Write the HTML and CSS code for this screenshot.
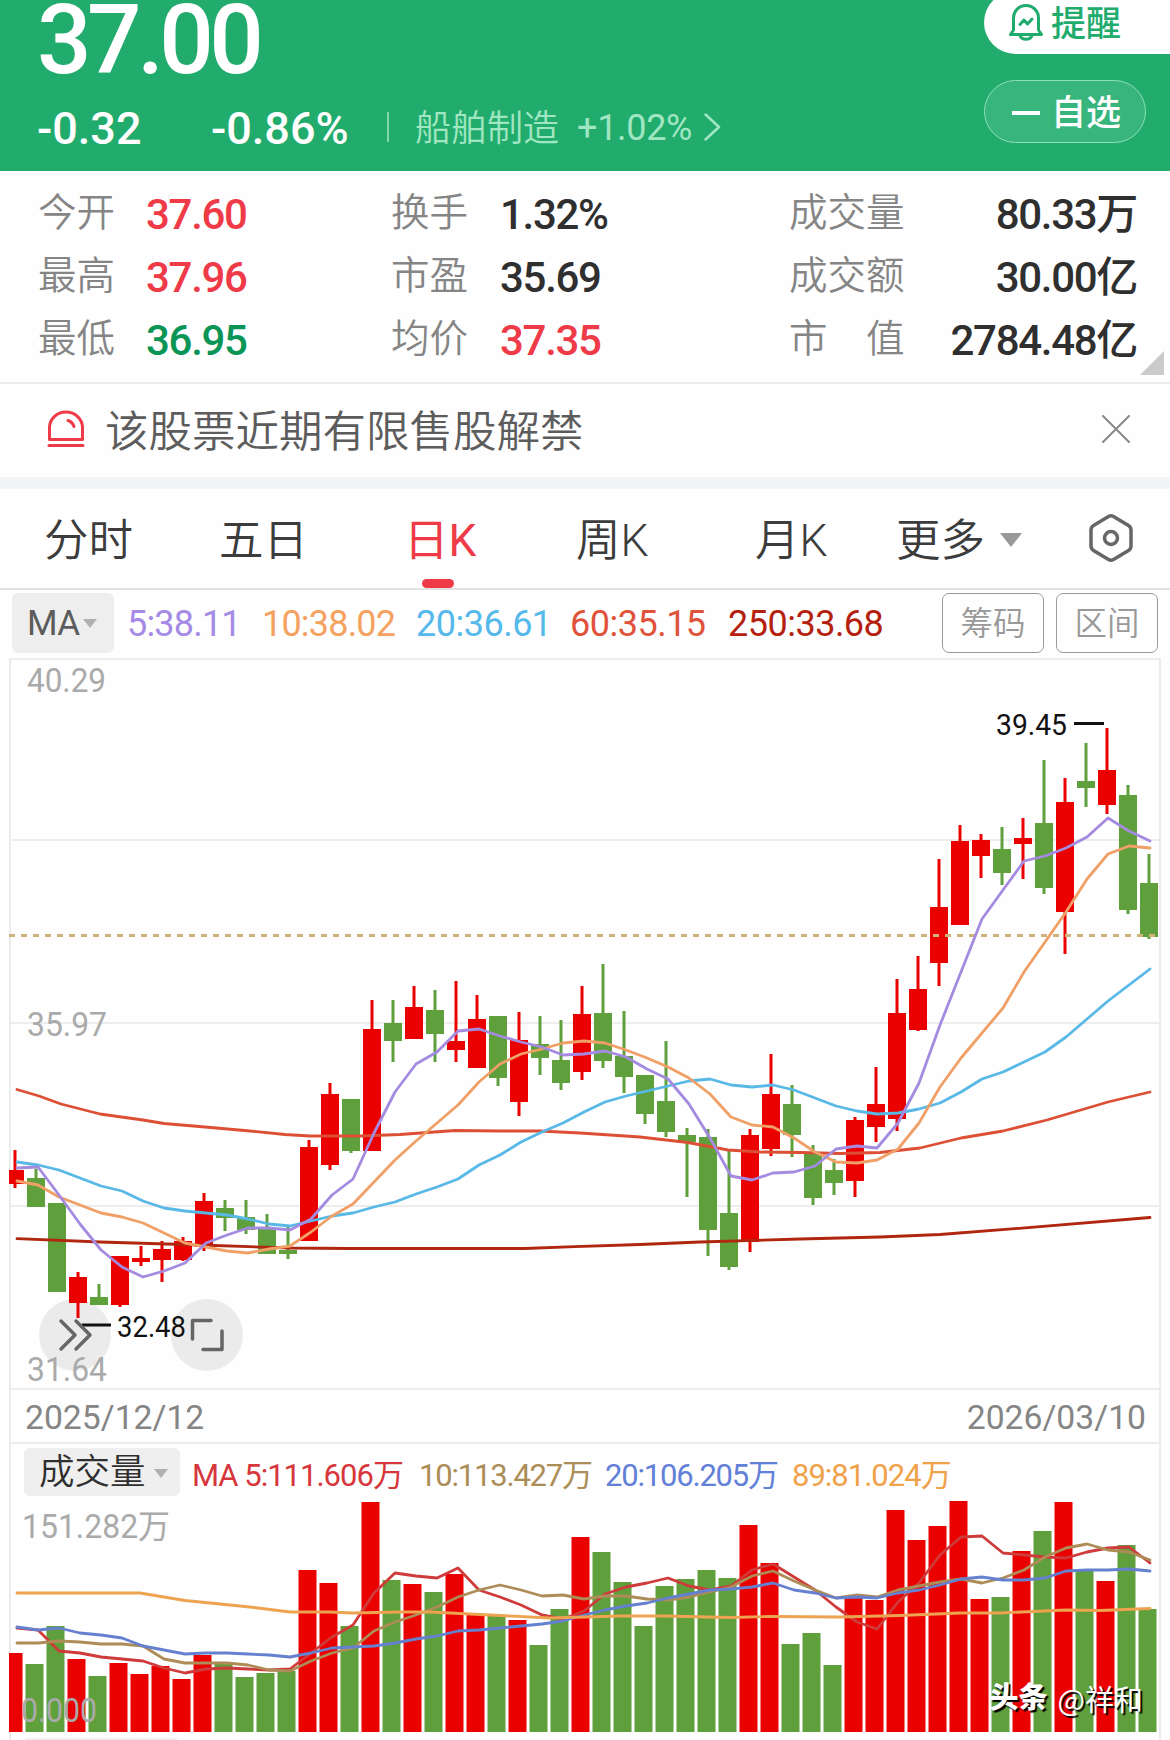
FILE: index.html
```html
<!DOCTYPE html>
<html lang="zh-CN">
<head>
    <meta charset="UTF-8">
    <meta name="viewport" content="width=device-width, initial-scale=1.0">
    <title>日K</title>
    <link rel="stylesheet" href="styles.css">
</head>
<body>
    <header class="quote-header">
        <div class="quote-main">
            <div class="price">37.00</div>
            <div class="change-row">
                <span class="change">-0.32</span>
                <span class="change-pct">-0.86%</span>
                <span class="divider"></span>
                <span class="sector">船舶制造</span>
                <span class="sector-pct">+1.02%</span>
                <svg class="chevron" width="17" height="28" viewBox="0 0 17 28"><path d="M1.5 1.5L15 14L1.5 26.5"/></svg>
            </div>
        </div>
        <div class="quote-actions">
            <div class="action remind">
                <svg width="36" height="38" viewBox="0 0 36 38">
                    <path d="M5.500 27V15a12.500 12.500 0 0 1 25 0v12l3 4.500H2.500z"/>
                    <path d="M12 32.500c1.500 5 10.500 5 12 0"/>
                    <path d="M12 21.500l4-4.500 3.500 4 4.500-5"/>
                </svg>
                <span>提醒</span>
            </div>
            <div class="action watch">
                <i class="minus"></i>
                <span>自选</span>
            </div>
        </div>
    </header>

    <section class="stats">
        <span class="label">今开</span><span class="num up">37.60</span>
        <span class="label">换手</span><span class="num">1.32%</span>
        <span class="label">成交量</span><span class="num last">80.33万</span>
        <span class="label">最高</span><span class="num up">37.96</span>
        <span class="label">市盈</span><span class="num">35.69</span>
        <span class="label">成交额</span><span class="num last">30.00亿</span>
        <span class="label">最低</span><span class="num down">36.95</span>
        <span class="label">均价</span><span class="num up">37.35</span>
        <span class="label">市　值</span><span class="num last">2784.48亿</span>
        <i class="corner"></i>
    </section>

    <section class="notice">
        <svg class="alarm" width="38" height="38" viewBox="0 0 38 38">
            <path d="M2.500 29.500V17.500a16.500 15.500 0 0 1 33 0v12z"/>
            <path d="M21 10.500c3 1 5 3 6 6"/>
            <path d="M2 35.500h34"/>
        </svg>
        <span class="notice-text">该股票近期有限售股解禁</span>
        <svg class="close" width="28" height="28" viewBox="0 0 28 28"><path d="M1 1L27 27M27 1L1 27"/></svg>
    </section>

    <nav class="tabs">
        <span>分时</span>
        <span>五日</span>
        <span class="active">日K</span>
        <span>周K</span>
        <span>月K</span>
        <span>更多</span>
        <i class="arrow"></i>
        <svg width="46" height="50" viewBox="0 0 46 50">
            <path d="M20.500 3.500q2.500-1.500 5 0l15 9q2.500 1.500 2.500 4.500v16q0 3-2.500 4.500l-15 9q-2.500 1.500-5 0l-15-9q-2.500-1.500-2.500-4.500v-16q0-3 2.500-4.500z"/>
            <circle cx="23" cy="25" r="6.500"/>
        </svg>
    </nav>

    <section class="ma-row">
        <div class="ma-select">MA<i class="arrow small"></i></div>
        <span class="ma5">5:38.11</span>
        <span class="ma10">10:38.02</span>
        <span class="ma20">20:36.61</span>
        <span class="ma60">60:35.15</span>
        <span class="ma250">250:33.68</span>
        <div class="tool first">筹码</div>
        <div class="tool">区间</div>
    </section>

    <main class="charts">
        <svg class="price-chart" id="priceChart" width="1170" height="732" viewBox="0 658 1170 732"></svg>
        <div class="dates"><span>2025/12/12</span><span>2026/03/10</span></div>
        <div class="vol-head">
            <div class="vol-select">成交量<i class="arrow small"></i></div>
            <span class="v5">MA 5:111.606万</span>
            <span class="v10">10:113.427万</span>
            <span class="v20">20:106.205万</span>
            <span class="v89">89:81.024万</span>
        </div>
        <svg class="vol-chart" id="volChart" width="1170" height="241" viewBox="0 1499 1170 241"></svg>
        <div class="watermark"><b>头条</b><span>@祥和</span></div>
    </main>

    <script src="chart.js"></script>
</body>
</html>
```
FILE: styles.css
```css
:root {
    --green: #21ac6e;
    --red: #ef3a48;
    --down: #0a9557;
    --text: #2f2f2f;
    --line: #ebebeb;
}

* {
    box-sizing: border-box;
    margin: 0;
    padding: 0;
}

body {
    width: 1170px;
    height: 1740px;
    overflow: hidden;
    background: #fefefe;
    color: var(--text);
    font-family: Roboto, "Noto Sans CJK SC", sans-serif;
    white-space: nowrap;
}

svg {
    display: block;
    flex: none;
    fill: none;
    stroke-linecap: round;
    stroke-linejoin: round;
}

/* header */
.quote-header {
    height: 171px;
    background: var(--green);
    color: #fff;
    display: flex;
    justify-content: space-between;
}

.quote-main {
    padding-left: 37px;
}

.price {
    height: 80px;
    line-height: 80px;
    font-size: 96px;
    font-weight: 500;
    letter-spacing: -4.500px;
}

.change-row {
    display: flex;
    align-items: center;
    height: 97px;
    font-size: 45px;
    font-weight: 500;
}

.change {
    width: 174px;
}

.change-pct {
    width: 176px;
}

.divider {
    width: 2px;
    height: 30px;
    margin-top: -3px;
    background: #7fd9a9;
}

.sector,
.sector-pct {
    color: #a0e6c0;
    font-size: 36px;
}

.sector {
    margin: -8px 0 0 26px;
    width: 162px;
    font-weight: 350;
}

.sector-pct {
    width: 127px;
    margin-top: -2px;
    font-weight: 400;
    letter-spacing: -0.300px;
}

.chevron {
    margin-top: -3px;
    stroke: #a0e6c0;
    stroke-width: 2.500;
}

.quote-actions {
    width: 186px;
    margin-top: -9px;
}

.action {
    display: flex;
    align-items: center;
    height: 63px;
    font-size: 35px;
    font-weight: 500;
}

.remind {
    background: #fff;
    color: var(--green);
    border-radius: 32px 0 0 32px;
    padding-left: 24px;
    gap: 7px;
    margin-bottom: 26px;
}

.remind svg {
    stroke: var(--green);
    stroke-width: 3;
    margin-top: -1px;
}

.remind span,
.watch span {
    line-height: 50px;
    margin-top: 4px;
}

.watch {
    width: 162px;
    padding-left: 27px;
    gap: 11px;
    background: #37b57c;
    border: 1.500px solid #8fe0b5;
    border-radius: 32px;
}

.minus {
    width: 28px;
    height: 4px;
    margin-top: 2px;
    background: #fff;
}

/* stats */
.stats {
    position: relative;
    display: grid;
    grid-template-columns: 108px 245px 109px 289px 126px 1fr;
    grid-auto-rows: 63px;
    align-items: center;
    height: 211px;
    padding: 12px 33px 0 38px;
}

.label {
    color: #858585;
    font-size: 38.500px;
    font-weight: 350;
    line-height: 50px;
    margin-top: -3px;
}

.num {
    font-size: 42px;
    font-weight: 500;
    line-height: 50px;
    letter-spacing: -1.300px;
}

.last {
    text-align: right;
}

.up {
    color: var(--red);
}

.down {
    color: var(--down);
}

.corner {
    position: absolute;
    right: 6px;
    bottom: 7px;
    border-left: 24px solid transparent;
    border-bottom: 24px solid #cacaca;
}

/* notice */
.notice {
    display: flex;
    align-items: center;
    height: 107px;
    padding: 0 40px 0 47px;
    border-top: 2px solid var(--line);
    border-bottom: 12px solid #f3f4f8;
}

.alarm {
    margin-top: -3px;
    stroke: var(--red);
    stroke-width: 3;
}

.notice-text {
    flex: 1;
    margin: 4px 0 0 20px;
    font-size: 43.500px;
    font-weight: 350;
    line-height: 60px;
    color: #5c5c5c;
}

.close {
    margin-top: -3px;
    stroke: #888;
    stroke-width: 2;
}

/* tabs */
.tabs {
    display: grid;
    grid-template-columns: 175px 185px 172px 179px 141px 104px 88px 46px;
    align-items: center;
    height: 101px;
    padding-left: 44px;
    border-bottom: 2px solid #e2e2e2;
    font-size: 44.500px;
    font-weight: 350;
    color: #3c3c3c;
}

.tabs span {
    position: relative;
    line-height: 60px;
    margin-top: 4px;
}

.tabs .active {
    color: var(--red);
    font-weight: 400;
}

.active::after {
    content: "";
    position: absolute;
    left: 18px;
    bottom: -17px;
    width: 32px;
    height: 9px;
    border-radius: 5px;
    background: var(--red);
}

.tabs svg {
    margin-top: -2px;
    stroke: #666;
    stroke-width: 3.500;
}

.arrow {
    width: 0;
    border: 11px solid transparent;
    border-top: 14px solid #999;
    border-bottom: 0;
}

.tabs .arrow {
    margin-top: 3px;
}

.arrow.small {
    border-width: 9px 7px 0;
    border-top-color: #b0b0b0;
}

/* moving averages */
.ma-row {
    display: flex;
    align-items: center;
    height: 68px;
    padding: 0 12px 2px;
    font-size: 36px;
    letter-spacing: -0.500px;
}

.ma-row > span {
    padding-top: 2px;
}

.ma-select {
    display: flex;
    align-items: center;
    gap: 3px;
    width: 102px;
    height: 60px;
    margin-right: 13px;
    padding-left: 15px;
    border-radius: 6px;
    background: #eee;
    color: #5c5c5c;
    font-size: 35px;
}

.ma5 { width: 135px; letter-spacing: -0.800px; color: #a58ae6; }
.ma10 { width: 154px; letter-spacing: -0.800px; color: #f5a15f; }
.ma20 { width: 154px; color: #55b9ec; }
.ma60 { width: 158px; color: #e0523a; }
.ma250 { color: #b5210f; }

.tool {
    width: 102px;
    height: 60px;
    line-height: 60px;
    border: 1.500px solid #9a9a9a;
    border-radius: 7px;
    color: #999;
    font-size: 32.500px;
    font-weight: 350;
    letter-spacing: 0;
    text-align: center;
}

.tool.first {
    margin: 0 12px 0 auto;
}

/* charts */
.charts {
    position: relative;
}

.dates {
    display: flex;
    justify-content: space-between;
    align-items: center;
    height: 52px;
    margin: 0 9px;
    padding: 3px 13px 0 14px;
    border: 2px solid var(--line);
    border-width: 0 2px;
    color: #858585;
    font-size: 33.700px;
}

.vol-head {
    display: flex;
    align-items: center;
    height: 57px;
    margin: 0 9px;
    padding: 1px 0 0 13px;
    border: 2px solid var(--line);
    border-bottom: 0;
    font-size: 31px;
    letter-spacing: -1px;
}

.vol-select {
    display: flex;
    align-items: center;
    gap: 8px;
    width: 156px;
    height: 48px;
    margin-right: 12px;
    padding: 0 0 0 15px;
    border-radius: 6px;
    background: #efefef;
    font-size: 35.500px;
    font-weight: 350;
    line-height: 40px;
    letter-spacing: 0;
}

.vol-select .arrow {
    margin-top: 2px;
}

.v5 { width: 227px; color: #d6363c; }
.v10 { width: 186px; color: #ac8d57; }
.v20 { width: 187px; color: #6280d8; }
.v89 { color: #f0a24a; }

.v10,
.v20 {
    letter-spacing: -1.200px;
}

.price-chart polyline,
.vol-chart polyline {
    stroke-width: 2.800;
}

.axis {
    fill: #aaa;
    font-size: 33px;
}

.mark {
    fill: #111;
    font-size: 29px;
}

.watermark {
    position: absolute;
    right: 27px;
    bottom: 22px;
    display: flex;
    gap: 10px;
    color: #fff;
    font-size: 29px;
    line-height: 40px;
    text-shadow: 2px 2px 1px #000;
}

.watermark b {
    font-weight: 900;
}

.watermark span {
    font-family: "Noto Sans CJK SC", sans-serif;
}
```
FILE: chart.js
```js
const RED = '#eb0000';
const GREEN = '#5f9f3c';
const STEP = 21;

// colour, high, low, body top, body bottom
const candles = [
    ['R',1150,1188,1170,1184],['G',1169,1206,1178,1207],['G',1203,1291,1203,1292],['R',1272,1318,1277,1303],
    ['G',1284,1305,1297,1305],['R',1256,1307,1256,1305],['R',1246,1266,1258,1262],['R',1241,1282,1249,1260],
    ['R',1237,1261,1241,1260],['R',1193,1251,1201,1247],['G',1200,1231,1208,1218],['G',1200,1234,1217,1230],
    ['G',1214,1254,1228,1254],['G',1227,1259,1250,1254],['R',1140,1241,1147,1241],['R',1083,1170,1094,1165],
    ['G',1099,1153,1099,1151],['R',1000,1151,1029,1151],['G',1000,1062,1023,1041],['R',986,1039,1007,1039],
    ['G',990,1062,1010,1034],['R',981,1062,1041,1050],['R',995,1068,1019,1068],['G',1016,1086,1016,1078],
    ['R',1012,1116,1040,1102],['G',1016,1075,1044,1058],['G',1020,1090,1060,1083],['R',986,1080,1014,1072],
    ['G',964,1068,1013,1061],['G',1011,1093,1056,1077],['G',1075,1124,1075,1114],['G',1041,1137,1101,1132],
    ['G',1128,1197,1135,1142],['G',1129,1256,1137,1230],['G',1151,1270,1213,1267],['R',1129,1252,1135,1242],
    ['R',1054,1156,1094,1149],['G',1085,1157,1104,1135],['G',1145,1205,1153,1198],['G',1159,1195,1170,1183],
    ['R',1117,1197,1120,1181],['R',1067,1142,1104,1127],['R',979,1131,1013,1119],['R',956,1031,989,1030],
    ['R',859,986,907,963],['R',825,925,841,925],['R',834,878,840,856],['G',827,885,849,873],
    ['R',818,879,838,844],['G',760,894,823,888],['R',778,954,802,912],['G',743,807,781,788],
    ['R',728,814,770,805],['G',785,914,795,910],['G',854,939,883,937]
];

const ma5 = [1168,1167,1195,1224,1250,1267,1277,1271,1263,1243,1235,1228,1228,1230,1219,1195,1179,1133,1092,1064,1052,1031,1029,1036,1042,1047,1055,1054,1051,1057,1069,1079,1104,1138,1176,1180,1173,1172,1166,1149,1146,1148,1123,1083,1025,972,919,890,861,856,848,837,818,831,841];
const ma10 = [1181,1185,1197,1205,1213,1217,1223,1233,1243,1247,1251,1253,1249,1246,1232,1216,1204,1182,1160,1141,1123,1105,1082,1064,1054,1049,1043,1041,1043,1050,1058,1067,1078,1094,1117,1125,1127,1138,1152,1162,1163,1160,1149,1123,1087,1058,1033,1008,972,942,912,879,854,846,848];
const ma20 = [1162,1165,1170,1178,1186,1191,1201,1208,1211,1213,1215,1219,1224,1226,1221,1216,1213,1207,1202,1194,1187,1179,1165,1155,1142,1132,1123,1112,1102,1096,1091,1086,1081,1079,1085,1087,1085,1090,1098,1106,1111,1114,1113,1109,1103,1092,1079,1072,1062,1052,1037,1019,1001,985,969];
const ma60 = '17,1089.5 39,1096 61,1104 100,1114 143,1120 164,1123.5 205,1127 250,1131 285,1134.5 310,1136 360,1136 400,1134.5 455,1130.5 500,1131 540,1131 580,1133 640,1137 688,1142.5 728,1150 760,1152 800,1152.5 840,1153.5 880,1152.5 920,1148 961,1138 1003,1131 1047,1120 1108,1102 1150,1092';
const ma250 = '17,1238.7 100,1242 200,1245 290,1248 350,1248.5 461,1248.5 524,1248.5 575,1246.7 640,1244.5 700,1242 800,1239 880,1237 940,1234.5 1040,1226.7 1150,1217.5';

const volTop = [1653,1664,1626,1659,1676,1663,1674,1666,1679,1655,1662,1677,1673,1671,1570,1583,1626,1502,1580,1584,1592,1574,1615,1616,1620,1645,1609,1537,1552,1582,1626,1586,1579,1570,1578,1525,1563,1644,1633,1665,1598,1600,1510,1540,1526,1501,1599,1597,1551,1531,1502,1571,1581,1545,1609];
const vol5 = [1628,1630,1651,1653,1657,1659,1661,1668,1673,1669,1668,1669,1670,1669,1653,1637,1625,1593,1573,1576,1578,1568,1590,1597,1605,1615,1619,1611,1594,1587,1583,1578,1586,1590,1586,1570,1564,1577,1590,1607,1622,1629,1602,1583,1555,1537,1536,1553,1555,1557,1558,1552,1548,1547,1563];
const vol10 = [1643,1643,1641,1642,1644,1644,1646,1659,1663,1663,1663,1665,1670,1671,1661,1653,1648,1631,1622,1615,1607,1597,1590,1585,1590,1596,1595,1599,1596,1596,1599,1600,1597,1592,1587,1576,1571,1581,1590,1598,1595,1597,1590,1586,1582,1579,1583,1578,1570,1557,1548,1544,1550,1552,1560];
const vol20 = [1627,1630,1628,1633,1635,1638,1646,1650,1654,1653,1653,1654,1655,1657,1653,1648,1647,1646,1643,1639,1636,1631,1630,1628,1626,1624,1621,1615,1610,1606,1603,1598,1594,1590,1589,1587,1583,1590,1593,1598,1597,1598,1593,1590,1585,1579,1577,1580,1580,1578,1571,1570,1570,1569,1571];
const vol89 = '17,1593 140,1593 185,1600.5 250,1607 290,1612 330,1612 352,1613 400,1612 430,1612 480,1614.5 550,1618 620,1616 665,1616 730,1617.5 770,1616.5 840,1617 900,1615.5 960,1613 1000,1613 1066,1610 1100,1610.5 1150,1608.5';

function points(values) {
    return values.map((y, i) => `${17 + STEP * i - (i > 40 ? 1 : 0)},${y}`).join(' ');
}

function line(pts, color) {
    return `<polyline points="${pts}" stroke="${color}"/>`;
}

function rect(x, y, w, h, color) {
    return `<rect x="${x}" y="${y}" width="${w}" height="${h}" fill="${color}"/>`;
}

function text(x, y, width, cls, str) {
    return `<text x="${x}" y="${y}" textLength="${width}" lengthAdjust="spacingAndGlyphs" class="${cls}">${str}</text>`;
}

function drawPrice() {
    let out = '';
    [658, 839, 1022, 1205, 1388].forEach(y => out += rect(9, y, 1152, 2, '#ededed'));
    out += rect(9, 658, 2, 732, '#ebebeb') + rect(1159, 658, 2, 732, '#ebebeb');
    out += '<circle cx="75" cy="1335" r="36" fill="#ebebeb"/><circle cx="207" cy="1335" r="36" fill="#ebebeb"/>';
    candles.forEach(([c, high, low, top, bottom], i) => {
        const color = c === 'R' ? RED : GREEN;
        const cx = 15 + STEP * i;
        const left = Math.max(cx - 9, 9);
        out += rect(cx - 1.5, high, 3, low - high, color);
        out += rect(left, top, cx + 9 - left, bottom - top, color);
    });
    out += '<path d="M9 935.5H1158" stroke="#cfb27c" stroke-width="3" stroke-dasharray="6 6" stroke-linecap="butt"/>';
    out += line(ma250, '#b0260f') + line(ma60, '#dd4f35') + line(points(ma20), '#58b8e6');
    out += line(points(ma10), '#f0a066') + line(points(ma5), '#a48be0');
    out += text(27, 692, 79, 'axis', '40.29') + text(27, 1036, 80, 'axis', '35.97') + text(27, 1381, 80, 'axis', '31.64');
    out += rect(82, 1323.5, 29, 3, '#111') + text(117, 1337, 69, 'mark', '32.48');
    out += rect(1074, 722, 30, 3, '#111') + text(996, 734.5, 71, 'mark', '39.45');
    out += '<g stroke="#666" stroke-width="3.5"><path d="M61 1321L75 1335L61 1349M76 1321L90 1335L76 1349"/><path d="M192.500 1339V1320.500H211M222 1331V1349.500H203"/></g>';
    document.getElementById('priceChart').innerHTML = out;
}

function drawVolume() {
    let out = rect(9, 1499, 2, 241, '#ebebeb') + rect(1159, 1499, 2, 241, '#ebebeb');
    volTop.forEach((top, i) => {
        const left = Math.max(4.5 + STEP * i, 9);
        out += rect(left, top, 22.5 + STEP * i - left, 1732 - top, candles[i][0] === 'R' ? RED : GREEN);
    });
    out += line(points(vol5), '#cf3a3a') + line(points(vol10), '#ad8c58') + line(points(vol20), '#6580cf') + line(vol89, '#eda350');
    out += text(22, 1537.5, 148, 'axis', '151.282万') + text(21, 1721.5, 76, 'axis', '0.000');
    out += rect(25, 1738, 152, 2, '#efefef');
    document.getElementById('volChart').innerHTML = out;
}

drawPrice();
drawVolume();
```
